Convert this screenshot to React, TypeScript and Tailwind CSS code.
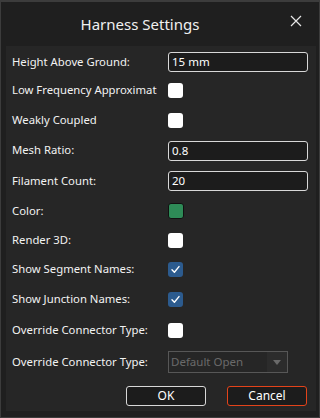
import React from 'react'

const font = { fontFamily: '"Segoe UI", "Noto Sans", "Open Sans", sans-serif' }

function Check({ checked }: { checked?: boolean }) {
  if (checked) {
    return (
      <div className="w-[15px] h-[15px] rounded-[3px] bg-[#2c5b8e] flex items-center justify-center">
        <svg width="11" height="11" viewBox="0 0 11 11" fill="none">
          <path d="M2 5.8 L4.4 8.2 L9 2.6" stroke="#ffffff" strokeWidth="1.4" strokeLinecap="round" strokeLinejoin="round" />
        </svg>
      </div>
    )
  }
  return <div className="w-[15px] h-[15px] rounded-[3px] bg-white" />
}

function TextBox({ value }: { value: string }) {
  return (
    <div className="w-[140px] h-[20px] rounded-[3px] border border-[#d8d8d8] bg-[#1c1c1c] flex items-center pl-[3px] text-[11.5px] text-white">
      {value}
    </div>
  )
}

function Row({ label, h, children }: { label: string; h: string; children: React.ReactNode }) {
  return (
    <div className={`flex items-center ${h}`}>
      <div className="w-[151px] pl-[6px] overflow-hidden whitespace-nowrap text-[11.3px] text-[#f2f2f2]">{label}</div>
      <div className="ml-[11px] flex items-center">{children}</div>
    </div>
  )
}

function App(): JSX.Element {
  return (
    <div style={font} className="w-[320px] h-[418px] bg-[#1f1f1f] border border-[#3c3c3c] border-t-2 flex flex-col">
      <div className="h-[44px] flex items-center relative">
        <div className="w-full text-center pr-[40px] text-[15px] text-[#f0f0f0]">Harness Settings</div>
        <svg className="absolute right-[17px] top-[13px]" width="12" height="12" viewBox="0 0 12 12">
          <path d="M1 1 L11 11 M11 1 L1 11" stroke="#e6e6e6" strokeWidth="1.2" />
        </svg>
      </div>
      <div className="ml-[5px] mr-[3px] h-[365px] bg-[#262626] pt-[2px] flex flex-col">
        <Row label="Height Above Ground:" h="h-[28px]">
          <TextBox value="15 mm" />
        </Row>
        <Row label="Low Frequency Approximation:" h="h-[29px]">
          <Check />
        </Row>
        <Row label="Weakly Coupled" h="h-[30px]">
          <Check />
        </Row>
        <Row label="Mesh Ratio:" h="h-[31px]">
          <TextBox value="0.8" />
        </Row>
        <Row label="Filament Count:" h="h-[30px]">
          <TextBox value="20" />
        </Row>
        <Row label="Color:" h="h-[30px]">
          <div className="w-[16px] h-[16px] rounded-[3px] bg-[#2e8b57] border border-[#111111]" />
        </Row>
        <Row label="Render 3D:" h="h-[29px]">
          <Check />
        </Row>
        <Row label="Show Segment Names:" h="h-[29px]">
          <Check checked />
        </Row>
        <Row label="Show Junction Names:" h="h-[30px]">
          <Check checked />
        </Row>
        <Row label="Override Connector Type:" h="h-[32px]">
          <Check />
        </Row>
        <Row label="Override Connector Type:" h="h-[32px]">
          <div className="w-[120px] h-[22px] border border-[#575757] bg-[#262626] flex">
            <div className="flex-1 flex items-center pl-[2px] text-[11.5px] text-[#6a6a6a]">Default Open</div>
            <div className="w-[20px] bg-[#2c2c2c] flex items-center justify-center">
              <svg width="8" height="5" viewBox="0 0 8 5">
                <path d="M0 0 L8 0 L4 5 Z" fill="#6a6a6a" />
              </svg>
            </div>
          </div>
        </Row>
        <div className="flex gap-[21px] pl-[120px] mt-[8px]">
          <button className="w-[80px] h-[20px] rounded-[3px] border border-[#d8d8d8] bg-[#1c1c1c] text-[12px] text-white leading-none">OK</button>
          <button className="w-[80px] h-[20px] rounded-[3px] border border-[#e3431a] bg-[#1c1c1c] text-[12px] text-white leading-none">Cancel</button>
        </div>
      </div>
    </div>
  )
}

export default App
